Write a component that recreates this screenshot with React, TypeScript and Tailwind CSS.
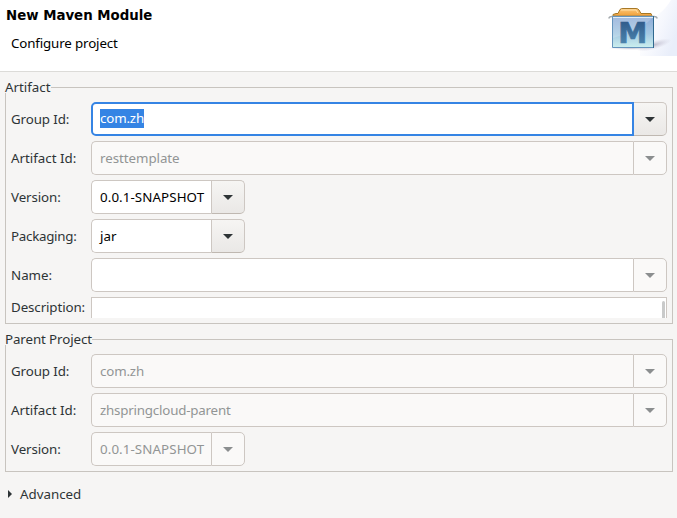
import React from "react";

function Arrow({ muted }: { muted?: boolean }) {
  return (
    <svg width="10" height="5" viewBox="0 0 10 5" className={muted ? "text-[#8b8e8f]" : "text-[#2e3436]"}>
      <path d="M0 0H10L5 5Z" fill="currentColor" />
    </svg>
  );
}

type ComboProps = {
  value: string;
  tracking?: string;
  disabled?: boolean;
  mutedButton?: boolean;
  focused?: boolean;
  narrow?: boolean;
};

function Combo({ value, tracking = "", disabled, mutedButton, focused, narrow }: ComboProps) {
  const muted = disabled || mutedButton;
  return (
    <div className={`flex h-[34px] ${narrow ? "w-[154px]" : "w-[576px]"}`}>
      <div
        className={`flex min-w-0 flex-1 items-center rounded-l-[5px] ${
          focused ? "border-2 border-[#3584e4] pb-px pl-[7px]" : "border border-r-0 border-[#cdc7c2] pl-2"
        } ${disabled ? "bg-[#faf9f8] text-[#929595]" : "bg-white text-black"}`}
      >
        <span className={`whitespace-nowrap leading-[19px] ${tracking} ${focused ? "inline-block h-[19px] w-[44px] bg-[#3584e4] text-white" : ""}`}>{value}</span>
      </div>
      <div
        className={`flex items-center justify-center rounded-r-[5px] border border-[#cdc7c2] ${
          focused ? "w-[33px] border-l-0" : "w-[34px]"
        } ${muted ? "bg-[#faf9f8]" : "border-b-[#bfb8b1] bg-gradient-to-b from-[#f6f5f3] to-[#eae8e6]"}`}
      >
        <Arrow muted={muted} />
      </div>
    </div>
  );
}

function Row({ label, tracking = "", children }: { label: string; tracking?: string; children: React.ReactNode }) {
  return (
    <div className="flex items-center">
      <div className={`w-[80px] shrink-0 whitespace-nowrap leading-[18px] ${tracking}`}>{label}</div>
      {children}
    </div>
  );
}

function Group({ title, tracking = "", className, children }: { title: string; tracking?: string; className: string; children: React.ReactNode }) {
  return (
    <fieldset className={`ml-[5px] w-[668px] border border-[#c8c4bf] ${className}`}>
      <legend className={`-ml-px h-[11px] whitespace-nowrap leading-[11px] ${tracking}`}>{title}</legend>
      <div className="flex flex-col gap-[5px] pl-[5px] pt-[9px]">{children}</div>
    </fieldset>
  );
}

function MavenBanner() {
  return (
    <svg width="77" height="56" viewBox="600 0 77 56" className="shrink-0">
      <defs>
        <linearGradient id="sky" gradientUnits="userSpaceOnUse" x1="645" x2="677" y1="22" y2="34">
          <stop offset="0" stopColor="#fff" />
          <stop offset="0.5" stopColor="#f5f7fd" />
          <stop offset="1" stopColor="#e9eefa" />
        </linearGradient>
        <linearGradient id="box" x1="0" x2="0" y1="0" y2="1">
          <stop offset="0" stopColor="#8fabd8" />
          <stop offset="0.55" stopColor="#a4c8e2" />
          <stop offset="1" stopColor="#cbefee" />
        </linearGradient>
        <linearGradient id="folder" x1="0" x2="0" y1="0" y2="1">
          <stop offset="0" stopColor="#fbc77c" />
          <stop offset="1" stopColor="#f09e35" />
        </linearGradient>
        <linearGradient id="letter" x1="0" x2="0" y1="0" y2="1">
          <stop offset="0" stopColor="#2c5485" />
          <stop offset="1" stopColor="#5390b8" />
        </linearGradient>
        <radialGradient id="shade">
          <stop offset="0" stopColor="#a6a3b8" stopOpacity=".7" />
          <stop offset="1" stopColor="#c8c5d7" stopOpacity="0" />
        </radialGradient>
      </defs>
      <path d="M677 0H671Q661 17 640 24V56H677Z" fill="url(#sky)" />
      <ellipse cx="654" cy="45" rx="18" ry="4.5" fill="url(#shade)" transform="rotate(-16 654 45)" />
      <ellipse cx="631" cy="48" rx="23" ry="2" fill="url(#shade)" />
      <path d="M613 16V14.5L616 13.5H618L620 9.5Q621 8.5 623 8.5H636Q638 8.5 639 10L641 13.5H651L652 16Z" fill="url(#folder)" stroke="#a77826" />
      <path d="M621 10H636L638 13" fill="none" stroke="#ffe0a6" />
      <path d="M609 18.5Q609 16.5 612 16.5H654Q657 16.5 657 18.5" fill="none" stroke="#a4aaae" strokeWidth="1.5" />
      <path d="M612.5 16.5H653.5V47.5H612.5Z" fill="url(#box)" stroke="#6594bc" />
      <path d="M613 17H653Q643 29 613 38Z" fill="#fff" opacity=".18" />
      <path d="M613 17.5H653" stroke="#e0edf8" />
      <path d="M653.5 16V48" stroke="#30698f" />
      <text x="618.3" y="43.3" textLength="29" lengthAdjust="spacingAndGlyphs" fontFamily="DejaVu Sans, sans-serif" fontWeight="700" fontSize="28.5" fill="url(#letter)" stroke="url(#letter)" strokeWidth=".7">M</text>
    </svg>
  );
}

export default function App() {
  return (
    <main className="h-[518px] w-[677px] overflow-hidden bg-[#f6f5f4] font-['Noto_Sans',sans-serif] text-[13.33px] text-[#2e3436]">
      <header className="flex h-[72px] justify-between border-b border-[#dcdbd8] bg-white text-black">
        <div className="pt-[7px]">
          <h1 className="pl-[6px] font-['DejaVu_Sans',sans-serif] text-[13.33px] font-bold leading-[18px]">New Maven Module</h1>
          <p className="mt-[9px] pl-[11px] leading-[18px] tracking-[-0.14px]">Configure project</p>
        </div>
        <MavenBanner />
      </header>
      <Group title="Artifact" className="mt-[10px] h-[242px]">
        <Row label="Group Id:" tracking="tracking-[-0.1px]"><Combo value="com.zh" tracking="tracking-[-0.16px]" focused /></Row>
        <Row label="Artifact Id:"><Combo value="resttemplate" tracking="tracking-[-0.05px]" disabled /></Row>
        <Row label="Version:" tracking="tracking-[-0.1px]"><Combo value="0.0.1-SNAPSHOT" tracking="tracking-[0.09px]" narrow /></Row>
        <Row label="Packaging:" tracking="tracking-[-0.27px]"><Combo value="jar" narrow /></Row>
        <Row label="Name:"><Combo value="" mutedButton /></Row>
        <Row label="Description:" tracking="-mt-[2px] tracking-[-0.1px]">
          <div className="flex h-[21px] w-[576px] items-end justify-end border border-b-0 border-[#cdc7c2] bg-white pr-px">
            <div className="h-[17px] w-[3px] rounded-t-full bg-[#c9caca]" />
          </div>
        </Row>
      </Group>
      <Group title="Parent Project" tracking="tracking-[-0.1px]" className="mt-[10px] h-[138px]">
        <Row label="Group Id:" tracking="tracking-[-0.1px]"><Combo value="com.zh" tracking="tracking-[-0.16px]" disabled /></Row>
        <Row label="Artifact Id:"><Combo value="zhspringcloud-parent" tracking="tracking-[-0.2px]" disabled /></Row>
        <Row label="Version:" tracking="tracking-[-0.1px]"><Combo value="0.0.1-SNAPSHOT" tracking="tracking-[0.09px]" disabled narrow /></Row>
      </Group>
      <div className="mt-[13px] flex items-center pl-2 leading-[18px]">
        <svg width="5" height="8" viewBox="0 0 5 8" className="mr-[7px]"><path d="M0 0L4 4L0 8Z" fill="#2e3436" /></svg>
        <span>Advanced</span>
      </div>
    </main>
  );
}
